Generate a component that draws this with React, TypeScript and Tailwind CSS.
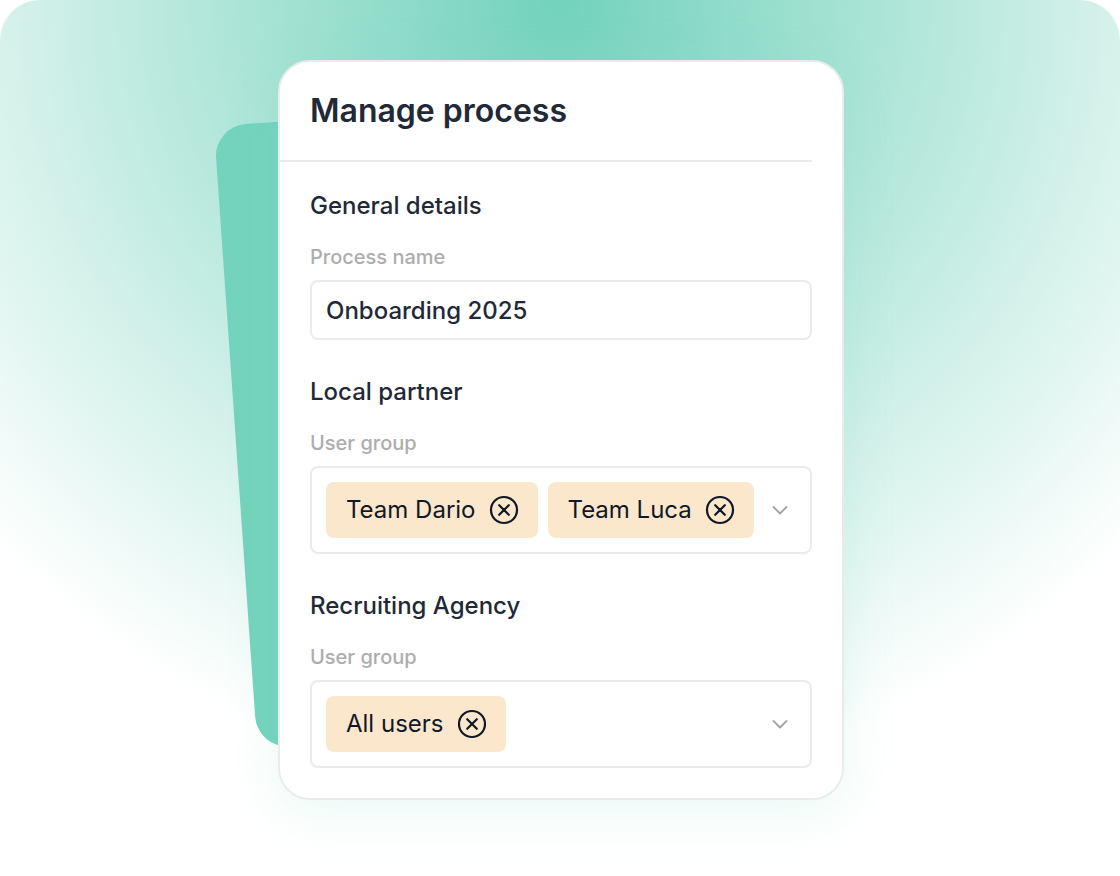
import type { ReactNode } from "react";

function ClearIcon() {
  return (
    <svg className="size-8" viewBox="0 0 32 32" fill="none" stroke="currentColor" strokeWidth="2.2" strokeLinecap="round">
      <circle cx="16" cy="16" r="13" />
      <path d="M11.2 11.2l9.6 9.6M20.8 11.2l-9.6 9.6" />
    </svg>
  );
}

function Tag({ label }: { label: string }) {
  return (
    <span className="flex h-14 shrink-0 items-center gap-3 rounded-lg bg-[#fbe7cc] pr-[18px] pl-5 text-2xl whitespace-nowrap text-[#111827]">
      {label}
      <button type="button" aria-label={`Remove ${label}`}>
        <ClearIcon />
      </button>
    </span>
  );
}

function TagField({ id, tags }: { id: string; tags: string[] }) {
  return (
    <div className="flex min-h-[88px] items-center gap-2.5 rounded-lg border-2 border-[#ebebeb] px-3.5">
      {tags.map((tag) => (
        <Tag key={tag} label={tag} />
      ))}
      <button id={id} type="button" aria-label="Open user groups" className="ml-auto text-[#a3a3a3]">
        <svg className="size-8" viewBox="0 0 32 32" fill="none" stroke="currentColor" strokeWidth="1.8" strokeLinecap="round" strokeLinejoin="round">
          <path d="M9.5 13l6.5 6.5 6.5-6.5" />
        </svg>
      </button>
    </div>
  );
}

function Section({ title, label, id, children }: { title: string; label: string; id: string; children: ReactNode }) {
  return (
    <section>
      <h2 className="text-2xl font-medium">{title}</h2>
      <label htmlFor={id} className="mt-5 mb-2 block text-xl leading-[30px] font-medium text-[#adadad]">
        {label}
      </label>
      {children}
    </section>
  );
}

export default function App() {
  return (
    <main className="relative isolate min-h-screen overflow-hidden rounded-t-[40px] bg-[radial-gradient(circle_784px_at_50%_0px,#72d2bb_0%,#ffffff_100%)] pt-[60px] pr-6 pb-[76px] pl-[26px] font-['Inter',sans-serif] text-[#1f2937] antialiased">
      <div className="relative mx-auto w-full max-w-[566px]">
        <div className="absolute top-12 -left-[43px] -z-10 h-[624px] w-[500px] -rotate-[4deg] rounded-[32px] bg-[#74d3bc]" />
        <div className="rounded-[32px] border-2 border-[#ebebeb] bg-white pb-[30px] shadow-[0_8px_52px_rgba(114,210,187,0.16)]">
          <header className="mr-[30px] border-b-2 border-[#ebebeb] px-[30px] py-7">
            <h1 className="text-[32px] leading-[42px] font-semibold">Manage process</h1>
          </header>
          <form className="flex flex-col gap-9 px-[30px] pt-7">
            <Section title="General details" label="Process name" id="process-name">
              <input
                id="process-name"
                type="text"
                defaultValue="Onboarding 2025"
                className="h-[60px] w-full rounded-lg border-2 border-[#ebebeb] px-3.5 text-2xl font-medium outline-none"
              />
            </Section>
            <Section title="Local partner" label="User group" id="partner-group">
              <TagField id="partner-group" tags={["Team Dario", "Team Luca"]} />
            </Section>
            <Section title="Recruiting Agency" label="User group" id="agency-group">
              <TagField id="agency-group" tags={["All users"]} />
            </Section>
          </form>
        </div>
      </div>
    </main>
  );
}
